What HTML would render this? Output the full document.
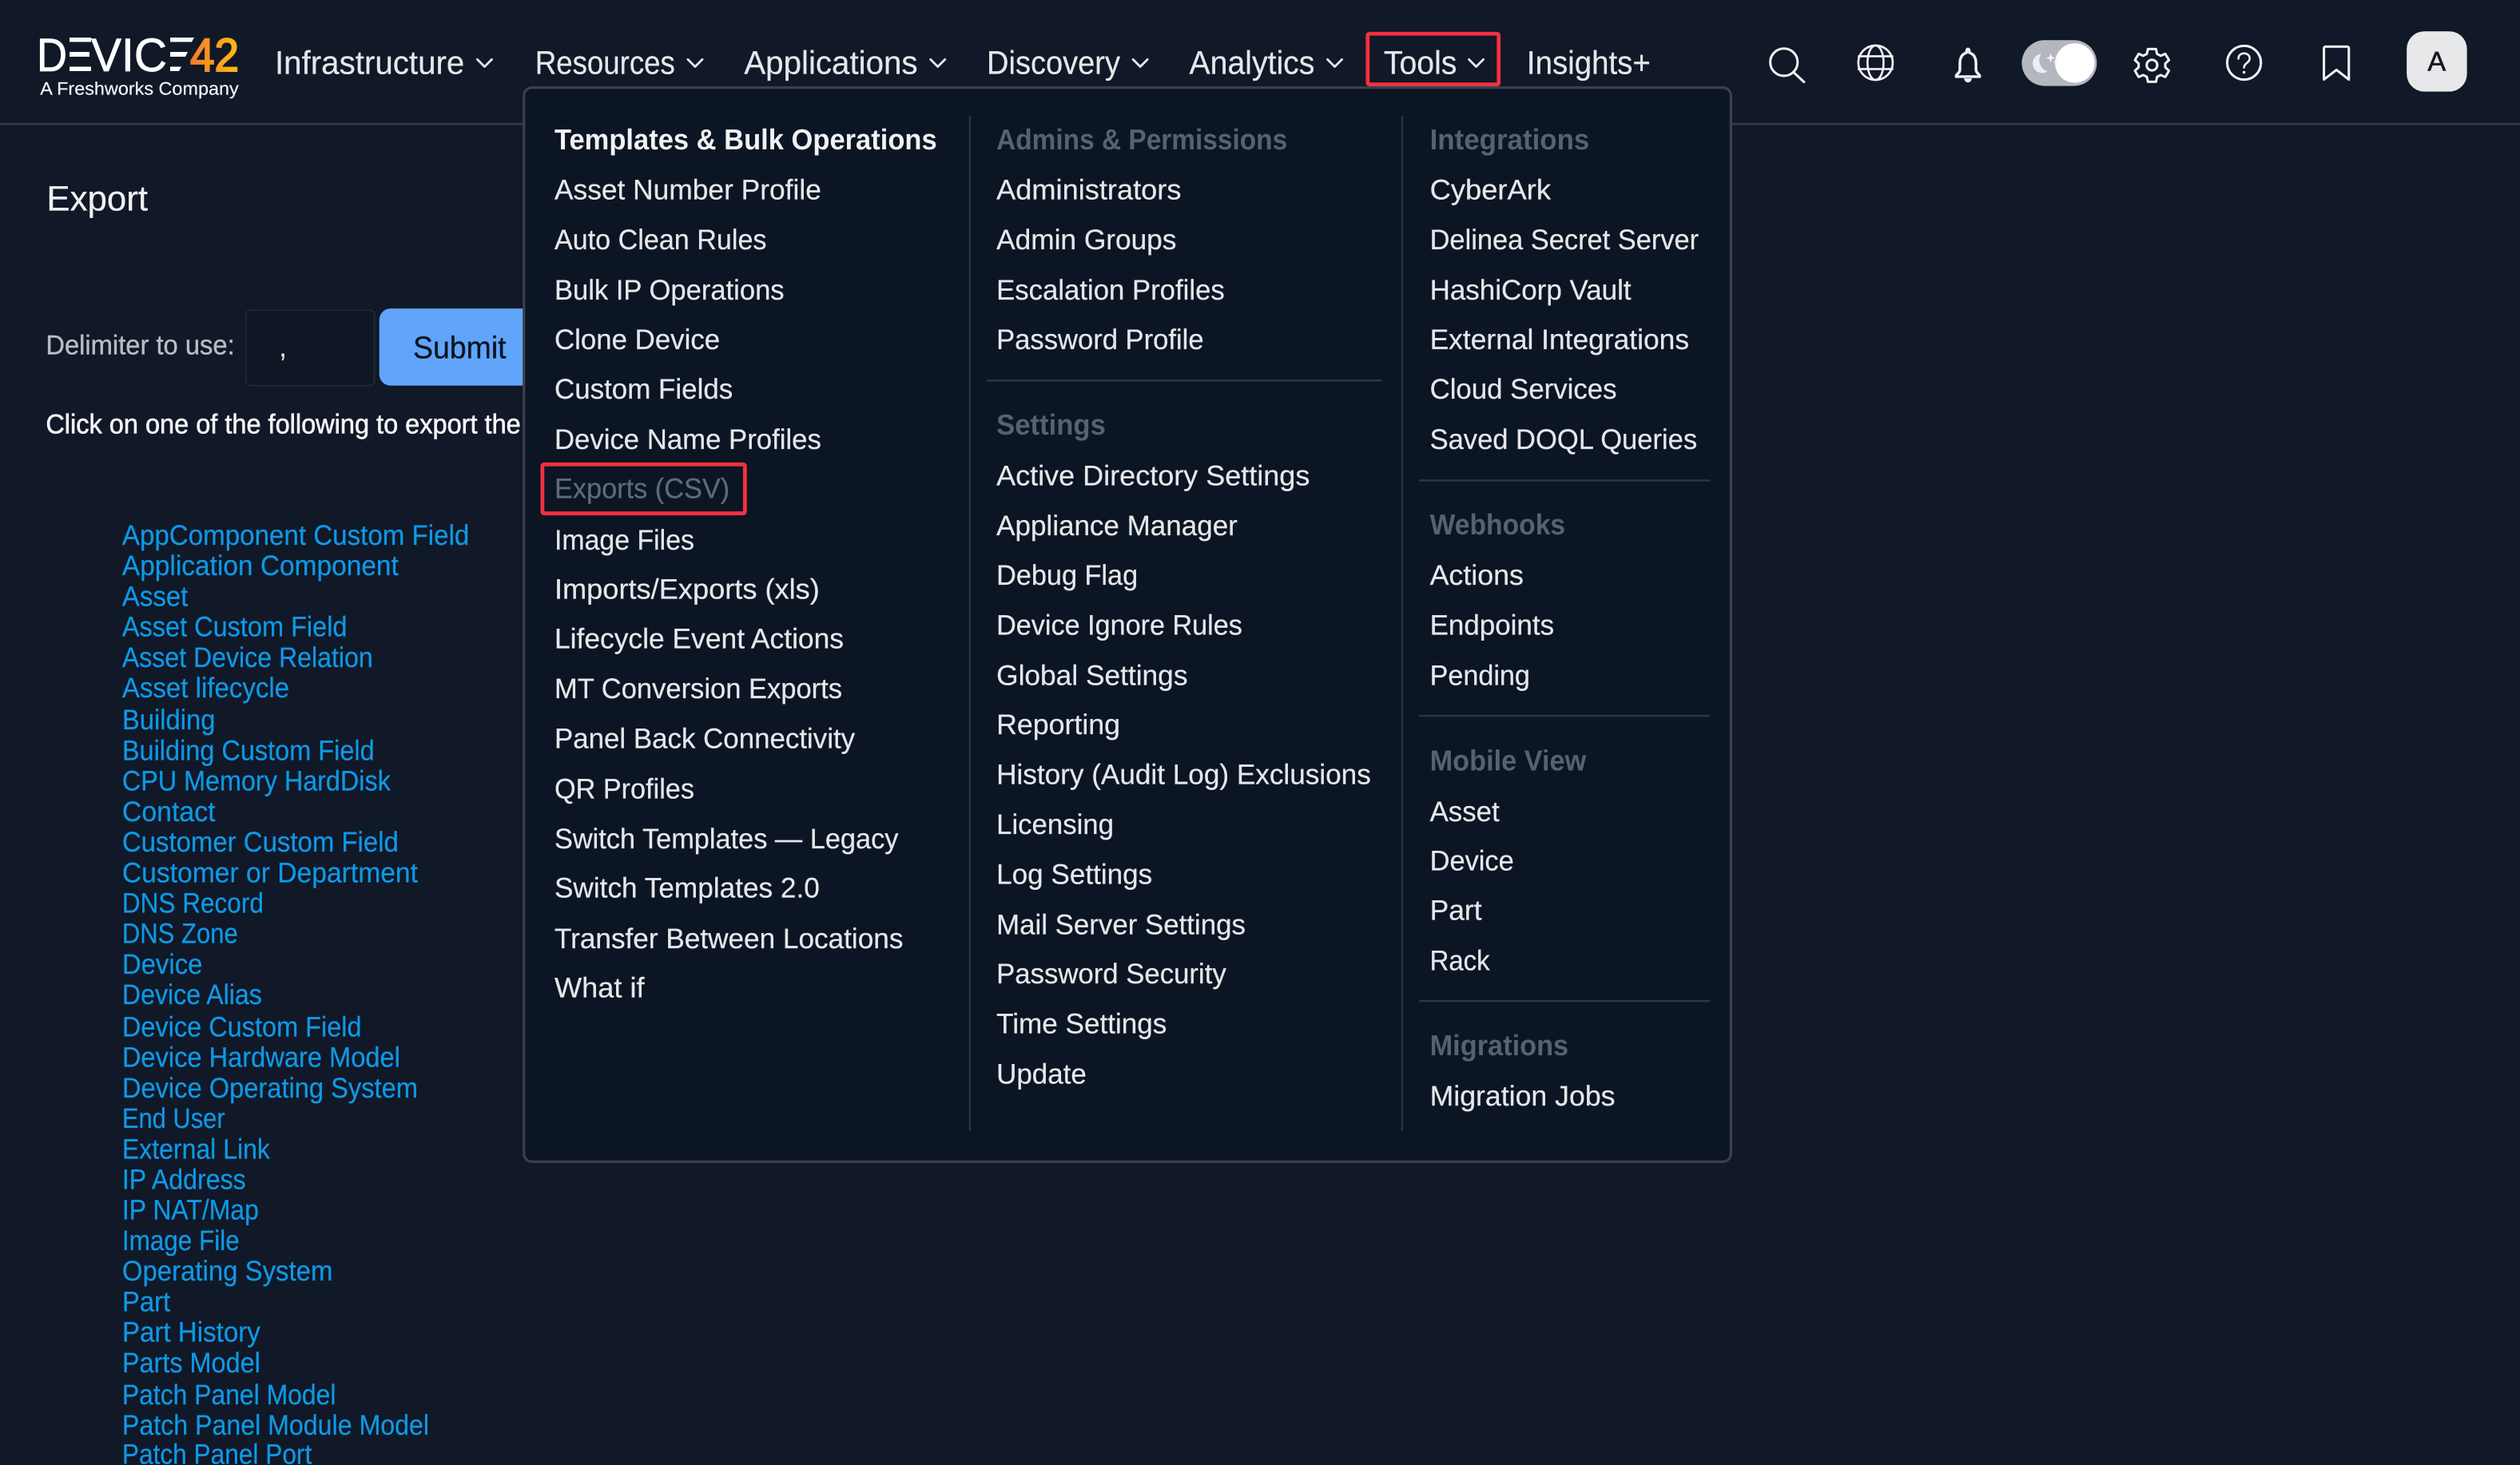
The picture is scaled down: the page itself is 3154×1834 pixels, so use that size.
<!DOCTYPE html>
<html lang="en"><head><meta charset="utf-8"><title>Export</title>
<style>
html,body{margin:0;padding:0;background:#111827;width:3154px;height:1834px;overflow:hidden}
svg{display:block}
text{font-family:"Liberation Sans",sans-serif;text-rendering:geometricPrecision}
.n{font-size:20.5px;fill:#e5e7eb;stroke:#e5e7eb;stroke-width:.12}
.i{font-size:17.6px;fill:#e5e7eb;stroke:#e5e7eb;stroke-width:.12}
.h{font-size:18px;font-weight:700;fill:#566273}
.l{font-size:17.6px;fill:#0d99e6;stroke:#0d99e6;stroke-width:.12}
.ic{fill:none;stroke:#f1f2f4;stroke-width:1.5;stroke-linecap:round;stroke-linejoin:round}
.ch{fill:none;stroke:#e5e7eb;stroke-width:1.4;stroke-linecap:round;stroke-linejoin:round}
</style></head><body>
<svg xmlns="http://www.w3.org/2000/svg" width="3154" height="1834" viewBox="0 0 1568 911.77">
<defs><linearGradient id="g" x1="0" x2="1" y1="0" y2="0"><stop offset="0" stop-color="#f47b2c"/><stop offset="1" stop-color="#fdbb12"/></linearGradient></defs>
<rect width="1568" height="912" fill="#111827"/>
<rect x="0" y="76.500" width="1568" height="1.300" fill="#333a48"/>

<!-- logo -->
<g transform="scale(0.49715)">
<text x="46" y="89" font-size="58.6" textLength="38" lengthAdjust="spacingAndGlyphs" fill="#fff" stroke="#fff" stroke-width=".8">D</text>
<rect x="87" y="47" width="27" height="5.500" fill="#fff"/><rect x="87" y="65" width="25" height="6" fill="#fff"/><rect x="87" y="83.500" width="27" height="5.500" fill="#fff"/>
<text x="114" y="89" font-size="58.6" textLength="95" lengthAdjust="spacingAndGlyphs" fill="#fff" stroke="#fff" stroke-width=".8">VIC</text>
<polygon points="213,47 243,47 240,52.500 213,52.500" fill="#fff"/><polygon points="213,65 235,65 232,71 213,71" fill="#fff"/><polygon points="213,83.500 227,83.500 224,89 213,89" fill="#fff"/>
<text x="238" y="89" font-size="58.6" textLength="61" lengthAdjust="spacingAndGlyphs" fill="url(#g)" stroke="url(#g)" stroke-width="2">42</text>
</g>
<text x="25" y="59" font-size="11.200" font-weight="500" fill="#f0f1f3" stroke="#f0f1f3" stroke-width=".12" textLength="123.500" lengthAdjust="spacingAndGlyphs">A Freshworks Company</text>

<!-- nav -->
<text class="n" x="171" y="46" textLength="118" lengthAdjust="spacingAndGlyphs">Infrastructure</text>
<polyline class="ch" points="297,37 301.500,41.500 306,37"/>
<text class="n" x="333" y="46" textLength="87" lengthAdjust="spacingAndGlyphs">Resources</text>
<polyline class="ch" points="428,37 432.500,41.500 437,37"/>
<text class="n" x="463" y="46" textLength="108" lengthAdjust="spacingAndGlyphs">Applications</text>
<polyline class="ch" points="579,37 583.500,41.500 588,37"/>
<text class="n" x="614" y="46" textLength="83" lengthAdjust="spacingAndGlyphs">Discovery</text>
<polyline class="ch" points="705,37 709.500,41.500 714,37"/>
<text class="n" x="740" y="46" textLength="78" lengthAdjust="spacingAndGlyphs">Analytics</text>
<polyline class="ch" points="826,37 830.500,41.500 835,37"/>
<text class="n" x="861" y="46" textLength="45.500" lengthAdjust="spacingAndGlyphs">Tools</text>
<polyline class="ch" points="914,37 918.500,41.500 923,37"/>
<text class="n" x="950" y="46" textLength="77" lengthAdjust="spacingAndGlyphs">Insights+</text>
<rect x="851" y="21" width="81.500" height="31.500" rx="1" fill="none" stroke="#f23040" stroke-width="2.400"/>

<!-- right icons -->
<circle class="ic" cx="1110" cy="38.700" r="8.500"/><line class="ic" x1="1116" y1="45" x2="1122.500" y2="51"/>
<g class="ic" style="stroke-width:1.300"><circle cx="1167" cy="39" r="10.700"/><ellipse cx="1167" cy="39" rx="5" ry="10.700"/><line x1="1156.500" y1="35" x2="1177.500" y2="35"/><line x1="1156.500" y1="43" x2="1177.500" y2="43"/></g>
<path class="ic" style="stroke-width:1.700" d="M1224.500 30.500c-.8 0-.9 1.500-.9 2.300c-3 .9-4.100 3.500-4.100 6.700v4c0 1.300-1.200 2.200-2.300 3.400v.8h14.600v-.8c-1.100-1.200-2.300-2.100-2.300-3.400v-4c0-3.200-1.100-5.800-4.100-6.700c0-.8-.1-2.300-.9-2.300z"/>
<path d="M1222 48.800h5c-.4 1.700-1.300 2.500-2.500 2.500s-2.100-.8-2.500-2.500z" fill="#f1f2f4"/>
<rect x="1258" y="25" width="46.700" height="28.500" rx="14.250" fill="#b4b7bf"/>
<circle cx="1291" cy="39.200" r="12.300" fill="#fff"/>
<path d="M1270 33.500a6 6 0 1 0 4 11a7.500 7.500 0 0 1-4-11z" fill="#eceef0"/>
<path d="M1276 33l.7 2.300 2.200.7-2.200.7-.7 2.300-.7-2.300-2.200-.7 2.200-.7zM1279.500 36.500l.5 1.800 1.700.5-1.700.5-.5 1.800-.5-1.800-1.700-.5 1.700-.5z" fill="#f5f6f7"/>
<g class="ic"><circle cx="1339" cy="40.500" r="3.300"/>
<path d="M1336.500 30.500h5l.7 3.100 2.200 1.100 2.900-1.200 2.300 3.900-2.300 2.100v2.400l2.300 2.100-2.300 3.900-2.900-1.200-2.200 1.100-.7 3.100h-5l-.7-3.100-2.200-1.100-2.900 1.200-2.300-3.900 2.300-2.100v-2.400l-2.300-2.100 2.300-3.900 2.900 1.200 2.200-1.100z"/></g>
<circle class="ic" cx="1396.300" cy="39" r="10.500"/>
<path class="ic" style="stroke-width:1.300" d="M1392.800 36.500c0-2 1.500-3.300 3.500-3.300s3.500 1.300 3.500 3.200c0 2.800-3.500 2.800-3.500 5.600"/>
<circle cx="1396.300" cy="45" r=".9" fill="#f1f2f4"/>
<path class="ic" d="M1447 29h13.500a1 1 0 0 1 1 1v19.500l-7.700-6-7.800 6V30a1 1 0 0 1 1-1z"/>
<rect x="1497.500" y="19.500" width="37.500" height="37.500" rx="11" fill="#e7e8ea"/>
<text x="1516.200" y="44" font-size="17" text-anchor="middle" fill="#16181d" stroke="#16181d" stroke-width=".3">A</text>

<!-- left content -->
<text x="29" y="131" font-size="22" fill="#eef0f2" stroke="#eef0f2" stroke-width=".12" textLength="63" lengthAdjust="spacingAndGlyphs">Export</text>
<text x="28.500" y="220.500" font-size="17" fill="#b9bcc2" stroke="#b9bcc2" stroke-width=".2" textLength="117.500" lengthAdjust="spacingAndGlyphs">Delimiter to use:</text>
<rect x="153" y="193" width="80" height="47" rx="3" fill="#0f1725" stroke="#1f2735" stroke-width="1"/>
<text x="173.500" y="222" font-size="18" fill="#e5e7eb">,</text>
<rect x="236" y="192" width="100" height="48" rx="7" fill="#60a5fa"/>
<text x="257" y="223" font-size="19.500" fill="#0c1422" stroke="#0c1422" stroke-width=".15" textLength="58" lengthAdjust="spacingAndGlyphs">Submit</text>
<text x="28.500" y="269.700" font-size="17" font-weight="500" stroke="#f4f5f6" stroke-width=".3" fill="#f4f5f6" textLength="295.500" lengthAdjust="spacingAndGlyphs">Click on one of the following to export the</text>

<text class="l" x="76" y="339" textLength="216" lengthAdjust="spacingAndGlyphs">AppComponent Custom Field</text>
<text class="l" x="76" y="358" textLength="172" lengthAdjust="spacingAndGlyphs">Application Component</text>
<text class="l" x="76" y="377" textLength="41" lengthAdjust="spacingAndGlyphs">Asset</text>
<text class="l" x="76" y="396" textLength="140" lengthAdjust="spacingAndGlyphs">Asset Custom Field</text>
<text class="l" x="76" y="415" textLength="156" lengthAdjust="spacingAndGlyphs">Asset Device Relation</text>
<text class="l" x="76" y="434" textLength="104" lengthAdjust="spacingAndGlyphs">Asset lifecycle</text>
<text class="l" x="76" y="454" textLength="58" lengthAdjust="spacingAndGlyphs">Building</text>
<text class="l" x="76" y="473" textLength="157" lengthAdjust="spacingAndGlyphs">Building Custom Field</text>
<text class="l" x="76" y="492" textLength="167" lengthAdjust="spacingAndGlyphs">CPU Memory HardDisk</text>
<text class="l" x="76" y="511" textLength="58" lengthAdjust="spacingAndGlyphs">Contact</text>
<text class="l" x="76" y="530" textLength="172" lengthAdjust="spacingAndGlyphs">Customer Custom Field</text>
<text class="l" x="76" y="549" textLength="184" lengthAdjust="spacingAndGlyphs">Customer or Department</text>
<text class="l" x="76" y="568" textLength="88" lengthAdjust="spacingAndGlyphs">DNS Record</text>
<text class="l" x="76" y="587" textLength="72" lengthAdjust="spacingAndGlyphs">DNS Zone</text>
<text class="l" x="76" y="606" textLength="50" lengthAdjust="spacingAndGlyphs">Device</text>
<text class="l" x="76" y="625" textLength="87" lengthAdjust="spacingAndGlyphs">Device Alias</text>
<text class="l" x="76" y="645" textLength="149" lengthAdjust="spacingAndGlyphs">Device Custom Field</text>
<text class="l" x="76" y="664" textLength="173" lengthAdjust="spacingAndGlyphs">Device Hardware Model</text>
<text class="l" x="76" y="683" textLength="184" lengthAdjust="spacingAndGlyphs">Device Operating System</text>
<text class="l" x="76" y="702" textLength="64" lengthAdjust="spacingAndGlyphs">End User</text>
<text class="l" x="76" y="721" textLength="92" lengthAdjust="spacingAndGlyphs">External Link</text>
<text class="l" x="76" y="740" textLength="77" lengthAdjust="spacingAndGlyphs">IP Address</text>
<text class="l" x="76" y="759" textLength="85" lengthAdjust="spacingAndGlyphs">IP NAT/Map</text>
<text class="l" x="76" y="778" textLength="73" lengthAdjust="spacingAndGlyphs">Image File</text>
<text class="l" x="76" y="797" textLength="131" lengthAdjust="spacingAndGlyphs">Operating System</text>
<text class="l" x="76" y="816" textLength="30" lengthAdjust="spacingAndGlyphs">Part</text>
<text class="l" x="76" y="835" textLength="86" lengthAdjust="spacingAndGlyphs">Part History</text>
<text class="l" x="76" y="854" textLength="86" lengthAdjust="spacingAndGlyphs">Parts Model</text>
<text class="l" x="76" y="874" textLength="133" lengthAdjust="spacingAndGlyphs">Patch Panel Model</text>
<text class="l" x="76" y="893" textLength="191" lengthAdjust="spacingAndGlyphs">Patch Panel Module Model</text>
<text class="l" x="76" y="911" textLength="118" lengthAdjust="spacingAndGlyphs">Patch Panel Port</text>

<!-- dropdown -->
<rect x="326" y="54.500" width="751" height="668.500" rx="5" fill="#0c1523" stroke="#3a404d" stroke-width="1.600"/>
<line x1="603.500" y1="72" x2="603.500" y2="704" stroke="#2c3340" stroke-width="1.200"/>
<line x1="872.500" y1="72" x2="872.500" y2="704" stroke="#2c3340" stroke-width="1.200"/>
<line x1="614" y1="236.800" x2="860" y2="236.800" stroke="#2f3542" stroke-width="1.200"/>
<line x1="883" y1="299" x2="1064" y2="299" stroke="#2f3542" stroke-width="1.200"/>
<line x1="883" y1="445.500" x2="1064" y2="445.500" stroke="#2f3542" stroke-width="1.200"/>
<line x1="883" y1="623" x2="1064" y2="623" stroke="#2f3542" stroke-width="1.200"/>

<text class="h" x="345" y="93" style="fill:#f1f2f4" textLength="238" lengthAdjust="spacingAndGlyphs">Templates &amp; Bulk Operations</text>
<text class="i" x="345" y="124" textLength="166" lengthAdjust="spacingAndGlyphs">Asset Number Profile</text>
<text class="i" x="345" y="155" textLength="132" lengthAdjust="spacingAndGlyphs">Auto Clean Rules</text>
<text class="i" x="345" y="186.500" textLength="143" lengthAdjust="spacingAndGlyphs">Bulk IP Operations</text>
<text class="i" x="345" y="217.300" textLength="103" lengthAdjust="spacingAndGlyphs">Clone Device</text>
<text class="i" x="345" y="248" textLength="111" lengthAdjust="spacingAndGlyphs">Custom Fields</text>
<text class="i" x="345" y="279.300" textLength="166" lengthAdjust="spacingAndGlyphs">Device Name Profiles</text>
<text class="i" x="345" y="310" style="fill:#5f6977;stroke:#5f6977" textLength="109" lengthAdjust="spacingAndGlyphs">Exports (CSV)</text>
<rect x="337.500" y="289" width="126" height="30.500" rx="1" fill="none" stroke="#f23040" stroke-width="2.400"/>
<text class="i" x="345" y="342" textLength="87" lengthAdjust="spacingAndGlyphs">Image Files</text>
<text class="i" x="345" y="372.500" textLength="165" lengthAdjust="spacingAndGlyphs">Imports/Exports (xls)</text>
<text class="i" x="345" y="403.500" textLength="180" lengthAdjust="spacingAndGlyphs">Lifecycle Event Actions</text>
<text class="i" x="345" y="434.500" textLength="179" lengthAdjust="spacingAndGlyphs">MT Conversion Exports</text>
<text class="i" x="345" y="465.500" textLength="187" lengthAdjust="spacingAndGlyphs">Panel Back Connectivity</text>
<text class="i" x="345" y="497" textLength="87" lengthAdjust="spacingAndGlyphs">QR Profiles</text>
<text class="i" x="345" y="528" textLength="214" lengthAdjust="spacingAndGlyphs">Switch Templates — Legacy</text>
<text class="i" x="345" y="558.500" textLength="165" lengthAdjust="spacingAndGlyphs">Switch Templates 2.0</text>
<text class="i" x="345" y="590" textLength="217" lengthAdjust="spacingAndGlyphs">Transfer Between Locations</text>
<text class="i" x="345" y="620.700" textLength="56" lengthAdjust="spacingAndGlyphs">What if</text>

<text class="h" x="620" y="93" textLength="181" lengthAdjust="spacingAndGlyphs">Admins &amp; Permissions</text>
<text class="i" x="620" y="124" textLength="115" lengthAdjust="spacingAndGlyphs">Administrators</text>
<text class="i" x="620" y="155" textLength="112" lengthAdjust="spacingAndGlyphs">Admin Groups</text>
<text class="i" x="620" y="186.500" textLength="142" lengthAdjust="spacingAndGlyphs">Escalation Profiles</text>
<text class="i" x="620" y="217.300" textLength="129" lengthAdjust="spacingAndGlyphs">Password Profile</text>
<text class="h" x="620" y="270.500" textLength="68" lengthAdjust="spacingAndGlyphs">Settings</text>
<text class="i" x="620" y="302" textLength="195" lengthAdjust="spacingAndGlyphs">Active Directory Settings</text>
<text class="i" x="620" y="333" textLength="150" lengthAdjust="spacingAndGlyphs">Appliance Manager</text>
<text class="i" x="620" y="364" textLength="88" lengthAdjust="spacingAndGlyphs">Debug Flag</text>
<text class="i" x="620" y="395" textLength="153" lengthAdjust="spacingAndGlyphs">Device Ignore Rules</text>
<text class="i" x="620" y="426.300" textLength="119" lengthAdjust="spacingAndGlyphs">Global Settings</text>
<text class="i" x="620" y="457" textLength="77" lengthAdjust="spacingAndGlyphs">Reporting</text>
<text class="i" x="620" y="488" textLength="233" lengthAdjust="spacingAndGlyphs">History (Audit Log) Exclusions</text>
<text class="i" x="620" y="519" textLength="73" lengthAdjust="spacingAndGlyphs">Licensing</text>
<text class="i" x="620" y="550" textLength="97" lengthAdjust="spacingAndGlyphs">Log Settings</text>
<text class="i" x="620" y="581.500" textLength="155" lengthAdjust="spacingAndGlyphs">Mail Server Settings</text>
<text class="i" x="620" y="612" textLength="143" lengthAdjust="spacingAndGlyphs">Password Security</text>
<text class="i" x="620" y="643" textLength="106" lengthAdjust="spacingAndGlyphs">Time Settings</text>
<text class="i" x="620" y="674.300" textLength="56" lengthAdjust="spacingAndGlyphs">Update</text>

<text class="h" x="889.700" y="93" textLength="99.300" lengthAdjust="spacingAndGlyphs">Integrations</text>
<text class="i" x="889.700" y="124" textLength="75.300" lengthAdjust="spacingAndGlyphs">CyberArk</text>
<text class="i" x="889.700" y="155" textLength="167.300" lengthAdjust="spacingAndGlyphs">Delinea Secret Server</text>
<text class="i" x="889.700" y="186.500" textLength="125.300" lengthAdjust="spacingAndGlyphs">HashiCorp Vault</text>
<text class="i" x="889.700" y="217.300" textLength="161.300" lengthAdjust="spacingAndGlyphs">External Integrations</text>
<text class="i" x="889.700" y="248" textLength="116.300" lengthAdjust="spacingAndGlyphs">Cloud Services</text>
<text class="i" x="889.700" y="279.300" textLength="166.300" lengthAdjust="spacingAndGlyphs">Saved DOQL Queries</text>
<text class="h" x="889.700" y="332.500" textLength="84.300" lengthAdjust="spacingAndGlyphs">Webhooks</text>
<text class="i" x="889.700" y="364" textLength="58.300" lengthAdjust="spacingAndGlyphs">Actions</text>
<text class="i" x="889.700" y="395" textLength="77.300" lengthAdjust="spacingAndGlyphs">Endpoints</text>
<text class="i" x="889.700" y="426.300" textLength="62.300" lengthAdjust="spacingAndGlyphs">Pending</text>
<text class="h" x="889.700" y="479.500" textLength="97.300" lengthAdjust="spacingAndGlyphs">Mobile View</text>
<text class="i" x="889.700" y="511" textLength="43.300" lengthAdjust="spacingAndGlyphs">Asset</text>
<text class="i" x="889.700" y="541.700" textLength="52.300" lengthAdjust="spacingAndGlyphs">Device</text>
<text class="i" x="889.700" y="572.500" textLength="32.300" lengthAdjust="spacingAndGlyphs">Part</text>
<text class="i" x="889.700" y="603.700" textLength="37.300" lengthAdjust="spacingAndGlyphs">Rack</text>
<text class="h" x="889.700" y="656.700" textLength="86.300" lengthAdjust="spacingAndGlyphs">Migrations</text>
<text class="i" x="889.700" y="688" textLength="115.300" lengthAdjust="spacingAndGlyphs">Migration Jobs</text>
</svg>
</body></html>
